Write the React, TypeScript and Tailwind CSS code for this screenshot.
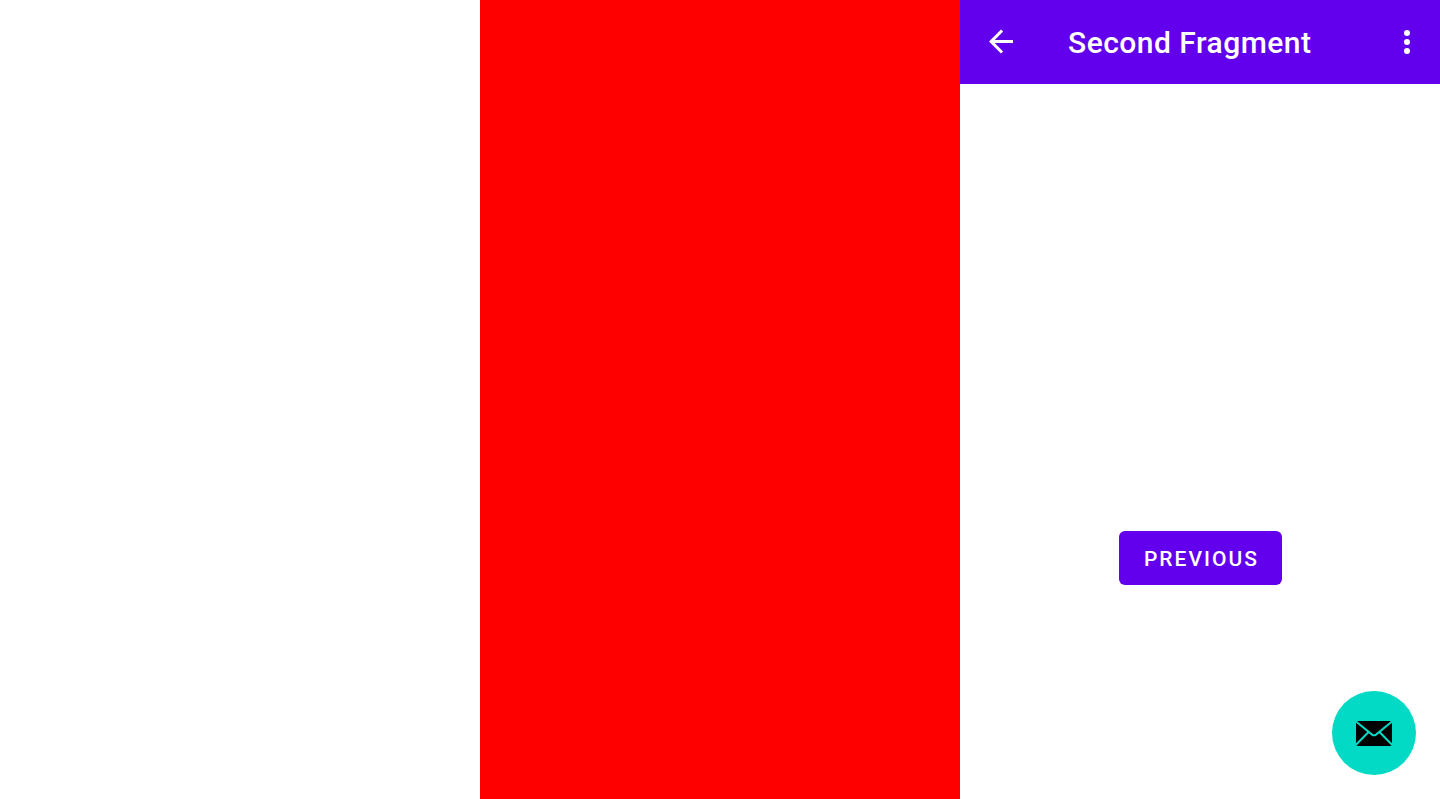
export default function App() {
  return (
    <main className="grid h-screen grid-cols-3 overflow-hidden bg-white font-['Roboto',sans-serif]">
      <section />
      <section className="bg-[#ff0000]" />
      <section className="relative flex flex-col">
        <header className="flex h-[84px] shrink-0 items-center bg-[#6200ee] text-white">
          <button aria-label="Back" className="ml-[23px] size-9">
            <svg viewBox="0 0.333 24 24" className="size-9" fill="currentColor">
              <path d="M20 11H7.83l5.59-5.59L12 4l-8 8 8 8 1.41-1.41L7.83 13H20v-2z" />
            </svg>
          </button>
          <h1 className="ml-[49px] flex-1 pt-0.5 text-[30px] leading-9 font-medium tracking-[0.48px]">Second Fragment</h1>
          <button aria-label="More options" className="mr-[15px] size-9">
            <svg viewBox="0 0 24 24" className="size-9" fill="currentColor">
              <path d="M12 8a2 2 0 1 0 0-4 2 2 0 0 0 0 4zm0 2a2 2 0 1 0 0 4 2 2 0 0 0 0-4zm0 6a2 2 0 1 0 0 4 2 2 0 0 0 0-4z" />
            </svg>
          </button>
        </header>
        <div className="flex flex-1 justify-center pt-[447px]">
          <button className="h-[54px] w-[163px] rounded-md bg-[#6200ee] pt-1 pl-[3px] text-[21px] font-medium tracking-[2.03px] text-white">PREVIOUS</button>
        </div>
        <button aria-label="Email" className="absolute right-6 bottom-6 flex size-[84px] items-center justify-center rounded-full bg-[#03dac5]">
          <svg viewBox="0 0 36 26" width="36" height="26">
            <rect width="36" height="25" y="1" rx="2" fill="#000" />
            <path d="M0 1.500 16 14.600q2 1.400 4 0L36 1.500M0 24.800 12.300 12.300M36 24.800 23.700 12.300" fill="none" stroke="#03dac5" strokeWidth="2" />
          </svg>
        </button>
      </section>
    </main>
  );
}
